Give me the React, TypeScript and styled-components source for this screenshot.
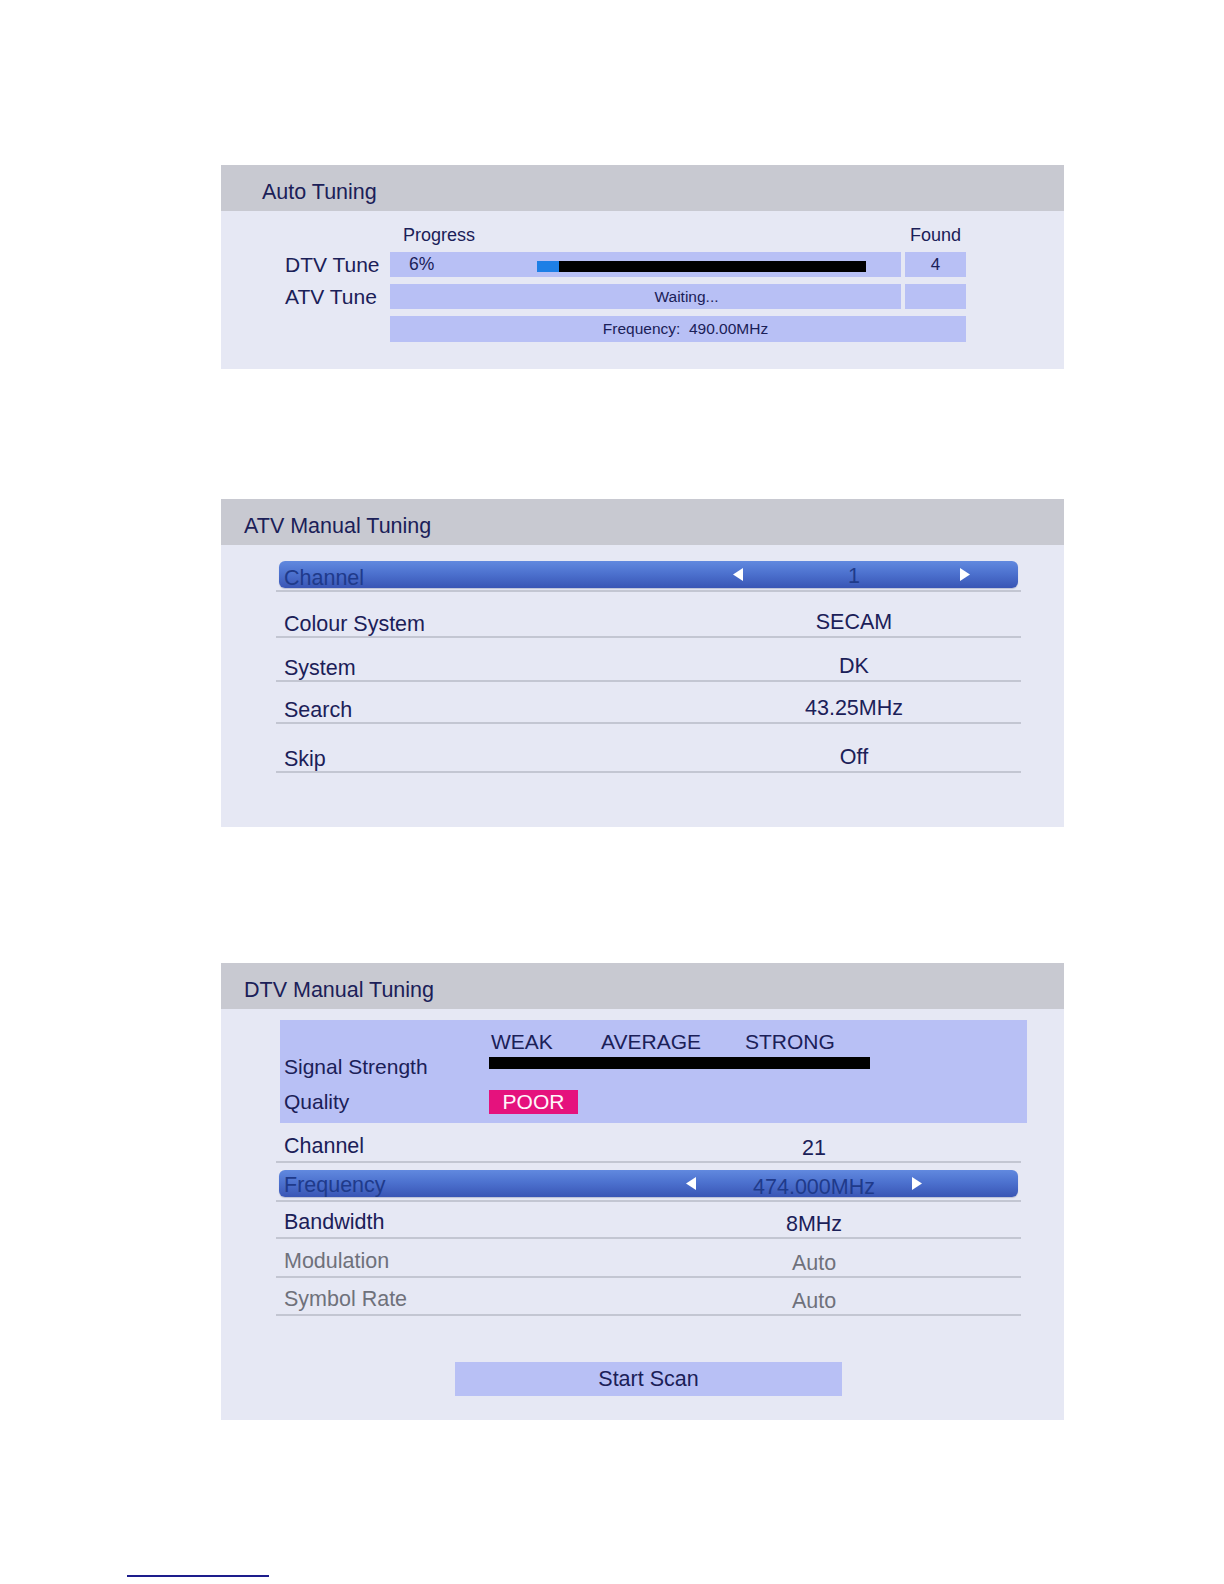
import React from "react";
import styled, { createGlobalStyle, css } from "styled-components";

const C = {
  header: "#c8c9d1",
  body: "#e6e8f4",
  box: "#b8c0f5",
  text: "#1b2058",
  muted: "#6f717b",
  active: "#1f3a8a",
  rule: "#c3c6d2",
};

const GlobalStyle = createGlobalStyle`
  html, body { margin: 0; padding: 0; background: #ffffff; }
  body {
    font-family: "Liberation Sans", Arial, Helvetica, sans-serif;
    color: ${C.text};
  }
`;

const Page = styled.div`
  width: 1224px;
  min-height: 1584px;
  box-sizing: border-box;
  padding-top: 165px;
  display: flex;
  flex-direction: column;
`;

const Panels = styled.div`
  margin-left: 221px;
  width: 843px;
  display: flex;
  flex-direction: column;
  gap: 130px;
`;

const Panel = styled.section<{ $offset?: number }>`
  background: ${C.body};
  margin-top: ${(p) => p.$offset ?? 0}px;
`;

const PanelHeader = styled.h2<{ $indent: number }>`
  margin: 0;
  height: 46px;
  box-sizing: border-box;
  padding: 8px 0 0 ${(p) => p.$indent}px;
  background: ${C.header};
  font-size: 21.5px;
  line-height: 38px;
  font-weight: normal;
  color: ${C.text};
`;

/* ---------- Auto Tuning ---------- */

const AutoBody = styled.div`
  padding: 14px 0 27px 64px;
  display: grid;
  grid-template-columns: 101px 511px 61px;
  grid-template-rows: 20px 25px 25px 26px;
  column-gap: 4px;
  row-gap: 7px;
`;

const ColHead = styled.div<{ $col: number; $center?: boolean; $pad?: number }>`
  grid-column: ${(p) => p.$col};
  font-size: 18px;
  line-height: 20px;
  text-align: ${(p) => (p.$center ? "center" : "left")};
  padding-left: ${(p) => p.$pad ?? 0}px;
`;

const TuneLabel = styled.div`
  grid-column: 1;
  font-size: 21px;
  line-height: 25px;
  white-space: nowrap;
`;

const InfoBox = styled.div<{ $span?: string; $center?: boolean; $pad?: number; $size?: number }>`
  grid-column: ${(p) => p.$span ?? "auto"};
  background: ${C.box};
  display: flex;
  align-items: center;
  justify-content: ${(p) => (p.$center ? "center" : "flex-start")};
  padding-left: ${(p) => p.$pad ?? 0}px;
  font-size: ${(p) => p.$size ?? 15.5}px;
  white-space: pre;
  color: ${C.text};
`;

const Percent = styled.span`
  width: 128px;
  font-size: 17.5px;
`;

const Track = styled.div`
  width: 329px;
  height: 11px;
  margin-top: 3px;
  background: #000;
  display: flex;
`;

const Fill = styled.div`
  height: 100%;
  background: #1e7fe6;
`;

/* ---------- Setting rows ---------- */

const RowsBody = styled.div<{ $pt: number; $pb: number }>`
  padding: ${(p) => p.$pt}px 0 ${(p) => p.$pb}px 0;
  display: flex;
  flex-direction: column;
`;

const RowList = styled.div`
  margin-left: 55px;
  width: 745px;
  display: flex;
  flex-direction: column;
`;

const Row = styled.div<{ $h: number }>`
  height: ${(p) => p.$h}px;
  box-sizing: border-box;
  border-bottom: 2px solid ${C.rule};
  display: flex;
  flex-direction: column;
  justify-content: flex-end;
`;

const RowLine = styled.div<{ $cols: string; $active?: boolean; $gap: number }>`
  margin: 0 3px ${(p) => (p.$active ? p.$gap : 0)}px;
  display: grid;
  grid-template-columns: ${(p) => p.$cols};
  align-items: end;
  ${(p) =>
    p.$active &&
    css`
      height: 27px;
      border-radius: 6px;
      background: linear-gradient(#6189df 0%, #4d72cf 45%, #3955b5 100%);
      box-shadow: 0 1px 1px rgba(60, 70, 120, 0.25);
    `}
`;

const RowText = styled.div<{ $pb: number; $drop: number; $muted?: boolean; $active?: boolean }>`
  font-size: 21.5px;
  line-height: 24px;
  white-space: nowrap;
  padding-bottom: ${(p) => p.$pb}px;
  margin-bottom: ${(p) => -p.$drop}px;
  color: ${(p) => (p.$active ? C.active : p.$muted ? C.muted : C.text)};
`;

const RowLabel = styled(RowText)`
  grid-column: 1;
  padding-left: 5px;
`;

const RowValue = styled(RowText)<{ $shift: number }>`
  grid-column: 3;
  text-align: center;
  padding-left: ${(p) => p.$shift}px;
`;

const ArrowCell = styled.svg<{ $col: number }>`
  grid-column: ${(p) => p.$col};
  align-self: center;
  display: block;
`;

const Arrow = ({ dir }: { dir: "left" | "right" }) => (
  <ArrowCell $col={dir === "left" ? 2 : 4} width="10" height="13" viewBox="0 0 10 13">
    {dir === "left" ? (
      <polygon points="10,0 10,13 0,6.5" fill="#ffffff" />
    ) : (
      <polygon points="0,0 0,13 10,6.5" fill="#ffffff" />
    )}
  </ArrowCell>
);

type RowData = { label: string; value: string; h: number; active?: boolean; muted?: boolean };

type RowsConfig = {
  cols: string;
  shift: number;
  gap: number;
  labelPb: number;
  valuePb: number;
};

const SettingRows = ({ rows, cfg }: { rows: RowData[]; cfg: RowsConfig }) => (
  <RowList>
    {rows.map((r) => {
      const drop = r.active ? cfg.gap : 0;
      return (
        <Row key={r.label} $h={r.h}>
          <RowLine $cols={cfg.cols} $active={r.active} $gap={cfg.gap}>
            <RowLabel $pb={cfg.labelPb} $drop={drop} $muted={r.muted} $active={r.active}>
              {r.label}
            </RowLabel>
            {r.active && <Arrow dir="left" />}
            <RowValue
              $shift={cfg.shift}
              $pb={cfg.valuePb}
              $drop={drop}
              $muted={r.muted}
              $active={r.active}
            >
              {r.value}
            </RowValue>
            {r.active && <Arrow dir="right" />}
          </RowLine>
        </Row>
      );
    })}
  </RowList>
);

/* ---------- DTV signal box ---------- */

const SignalBox = styled.div`
  margin-left: 59px;
  width: 747px;
  box-sizing: border-box;
  background: ${C.box};
  padding: 10px 0 9px 4px;
  display: grid;
  grid-template-columns: 205px 1fr;
  grid-template-rows: 24px 25px 35px;
  align-items: end;
  font-size: 21px;
  line-height: 24px;
`;

const SignalLabel = styled.div`
  grid-column: 1;
  white-space: nowrap;
`;

const Levels = styled.div`
  grid-column: 2;
  margin-left: 2px;
  display: grid;
  grid-template-columns: 110px 144px auto;
`;

const StrengthBar = styled.div`
  align-self: start;
  margin-top: 3px;
  width: 381px;
  height: 12px;
  background: #000;
`;

const PoorBadge = styled.div`
  width: 89px;
  height: 24px;
  background: #e5127d;
  color: #fff6fb;
  text-align: center;
  line-height: 24px;
`;

const ScanButton = styled.button`
  margin: 46px 0 0 234px;
  width: 387px;
  height: 34px;
  padding: 0;
  border: none;
  background: ${C.box};
  font-family: inherit;
  font-size: 21.5px;
  line-height: 34px;
  color: ${C.text};
  text-align: center;
`;

const FootRule = styled.div`
  margin: 155px 0 0 127px;
  width: 142px;
  height: 2px;
  background: #1d1d8c;
`;

const atvRows: RowData[] = [
  { label: "Channel", value: "1", h: 31, active: true },
  { label: "Colour System", value: "SECAM", h: 46 },
  { label: "System", value: "DK", h: 44 },
  { label: "Search", value: "43.25MHz", h: 42 },
  { label: "Skip", value: "Off", h: 49 },
];

const dtvRows: RowData[] = [
  { label: "Channel", value: "21", h: 40 },
  { label: "Frequency", value: "474.000MHz", h: 39, active: true },
  { label: "Bandwidth", value: "8MHz", h: 37 },
  { label: "Modulation", value: "Auto", h: 39, muted: true },
  { label: "Symbol Rate", value: "Auto", h: 38, muted: true },
];

const atvCfg: RowsConfig = {
  cols: "454px 10px 217px 10px 48px",
  shift: 5,
  gap: 2,
  labelPb: 0,
  valuePb: 2,
};

const dtvCfg: RowsConfig = {
  cols: "407px 10px 216px 10px 96px",
  shift: 20,
  gap: 3,
  labelPb: 3,
  valuePb: 1,
};

const progress = 6;

export default function App() {
  return (
    <>
      <GlobalStyle />
      <Page>
        <Panels>
          <Panel>
            <PanelHeader $indent={41}>Auto Tuning</PanelHeader>
            <AutoBody>
              <ColHead $col={2} $pad={13}>Progress</ColHead>
              <ColHead $col={3} $center>Found</ColHead>

              <TuneLabel>DTV Tune</TuneLabel>
              <InfoBox $pad={19}>
                <Percent>{progress}%</Percent>
                <Track>
                  <Fill style={{ width: `calc(${progress}% + 2px)` }} />
                </Track>
              </InfoBox>
              <InfoBox $center $size={17}>4</InfoBox>

              <TuneLabel>ATV Tune</TuneLabel>
              <InfoBox $center $pad={82}>Waiting...</InfoBox>
              <InfoBox />

              <InfoBox $span="2 / 4" $center $pad={15}>{"Frequency:  490.00MHz"}</InfoBox>
            </AutoBody>
          </Panel>

          <Panel>
            <PanelHeader $indent={23}>ATV Manual Tuning</PanelHeader>
            <RowsBody $pt={16} $pb={54}>
              <SettingRows rows={atvRows} cfg={atvCfg} />
            </RowsBody>
          </Panel>

          <Panel $offset={6}>
            <PanelHeader $indent={23}>DTV Manual Tuning</PanelHeader>
            <RowsBody $pt={11} $pb={24}>
              <SignalBox>
                <Levels>
                  <span>WEAK</span>
                  <span>AVERAGE</span>
                  <span>STRONG</span>
                </Levels>
                <SignalLabel>Signal Strength</SignalLabel>
                <StrengthBar />
                <SignalLabel>Quality</SignalLabel>
                <PoorBadge>POOR</PoorBadge>
              </SignalBox>
              <SettingRows rows={dtvRows} cfg={dtvCfg} />
              <ScanButton type="button">Start Scan</ScanButton>
            </RowsBody>
          </Panel>
        </Panels>
        <FootRule />
      </Page>
    </>
  );
}
